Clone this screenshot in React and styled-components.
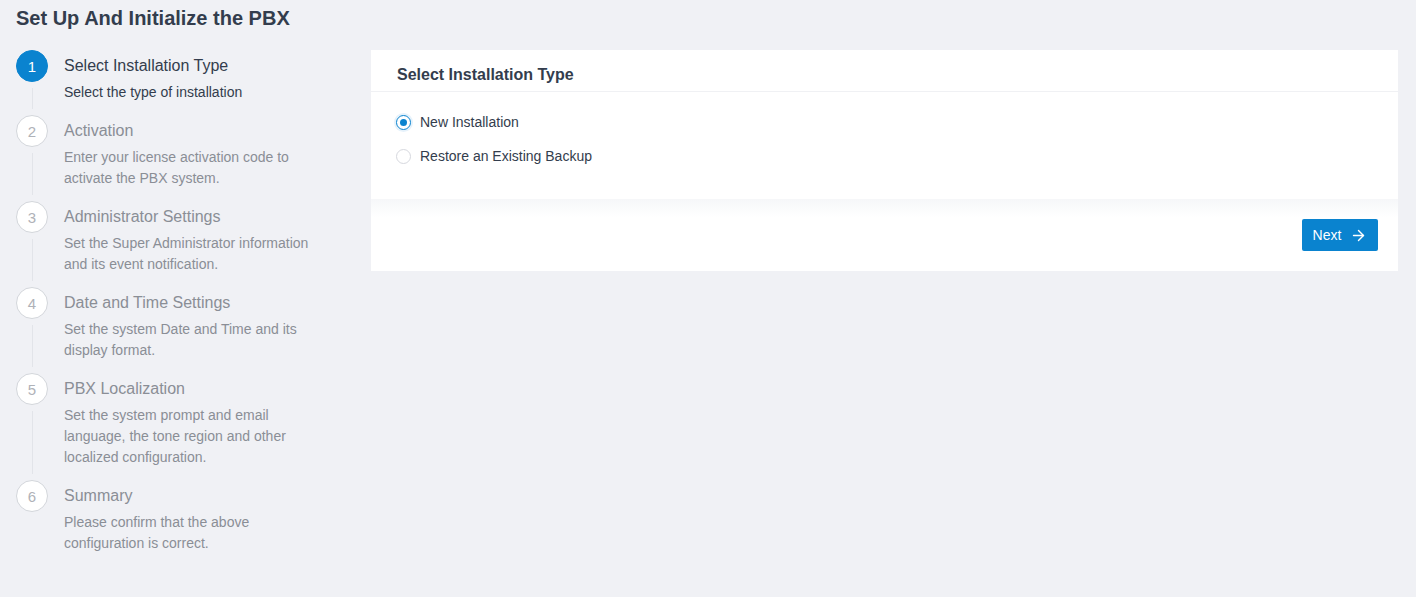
import styled, { createGlobalStyle } from "styled-components";
import { ArrowRight } from "lucide-react";

const GlobalStyle = createGlobalStyle`
  html, body {
    margin: 0;
    padding: 0;
    background: #f0f1f5;
    font-family: "Liberation Sans", Arial, sans-serif;
  }
`;

const Page = styled.div`
  min-height: 597px;
  box-sizing: border-box;
  padding: 6px 18px 0 16px;
`;

const Heading = styled.h1`
  margin: 0;
  font-size: 20px;
  line-height: 24px;
  font-weight: bold;
  color: #333d4d;
`;

const Body = styled.div`
  display: flex;
  align-items: flex-start;
  margin-top: 20px;
`;

const Steps = styled.div`
  width: 355px;
  flex: none;
  display: flex;
  flex-direction: column;
`;

const Step = styled.div`
  display: grid;
  grid-template-columns: 32px 1fr;
  column-gap: 16px;
  padding-bottom: 12px;
`;

const Rail = styled.div`
  display: flex;
  flex-direction: column;
  align-items: center;
`;

const Circle = styled.div`
  width: 32px;
  height: 32px;
  box-sizing: border-box;
  border-radius: 50%;
  display: flex;
  align-items: center;
  justify-content: center;
  font-size: 15px;
  background: ${(p) => (p.$active ? "#0a83cf" : "#fff")};
  border: 1px solid ${(p) => (p.$active ? "#0a83cf" : "#d3d6db")};
  color: ${(p) => (p.$active ? "#fff" : "#afb2b8")};
`;

const Connector = styled.div`
  flex: 1;
  width: 1px;
  margin: 6px 0 -6px;
  background: ${(p) => (p.$hidden ? "transparent" : "#e2e4e9")};
`;

const StepText = styled.div`
  display: flex;
  flex-direction: column;
`;

const StepTitle = styled.div`
  font-size: 16px;
  line-height: 32px;
  color: ${(p) => (p.$active ? "#333d4d" : "#8a8e96")};
`;

const StepDesc = styled.div`
  font-size: 14px;
  line-height: 21px;
  color: ${(p) => (p.$active ? "#333d4d" : "#8a8e96")};
  max-width: 260px;
`;

const Card = styled.div`
  flex: 1;
  background: #fff;
`;

const CardHeader = styled.div`
  height: 42px;
  box-sizing: border-box;
  padding: 8px 26px 0;
  display: flex;
  align-items: center;
  border-bottom: 1px solid #f0f1f4;
  font-size: 16px;
  font-weight: bold;
  color: #333d4d;
`;

const CardContent = styled.div`
  padding: 19px 25px 32px;
  display: flex;
  flex-direction: column;
  gap: 12px;
`;

const RadioRow = styled.label`
  display: flex;
  align-items: center;
  gap: 9px;
  height: 22px;
  font-size: 14px;
  color: #333d4d;
`;

const RadioDot = styled.span`
  width: 15px;
  height: 15px;
  box-sizing: border-box;
  border-radius: 50%;
  border: 1px solid ${(p) => (p.$checked ? "#0a83cf" : "#d6d8de")};
  background: #fff;
  display: flex;
  align-items: center;
  justify-content: center;
  box-shadow: ${(p) => (p.$checked ? "0 0 0 2px #e6f2fb" : "none")};

  &::after {
    content: "";
    width: 7px;
    height: 7px;
    border-radius: 50%;
    background: ${(p) => (p.$checked ? "#0a83cf" : "transparent")};
  }
`;

const CardFooter = styled.div`
  height: 72px;
  box-sizing: border-box;
  padding: 20px;
  display: flex;
  justify-content: flex-end;
  background: linear-gradient(to bottom, #f6f7f9 0px, #ffffff 18px);
`;

const Button = styled.button`
  height: 32px;
  width: 76px;
  border: none;
  border-radius: 2px;
  background: #0a83cf;
  color: #fff;
  font-family: inherit;
  font-size: 14px;
  display: flex;
  align-items: center;
  justify-content: center;
  gap: 9px;
  cursor: pointer;
`;

const steps = [
  { title: "Select Installation Type", desc: "Select the type of installation" },
  { title: "Activation", desc: "Enter your license activation code to activate the PBX system." },
  { title: "Administrator Settings", desc: "Set the Super Administrator information and its event notification." },
  { title: "Date and Time Settings", desc: "Set the system Date and Time and its display format." },
  { title: "PBX Localization", desc: "Set the system prompt and email language, the tone region and other localized configuration." },
  { title: "Summary", desc: "Please confirm that the above configuration is correct." },
];

export default function App() {
  return (
    <>
      <GlobalStyle />
      <Page>
        <Heading>Set Up And Initialize the PBX</Heading>
        <Body>
          <Steps>
            {steps.map((s, i) => (
              <Step key={s.title}>
                <Rail>
                  <Circle $active={i === 0}>{i + 1}</Circle>
                  <Connector $hidden={i === steps.length - 1} />
                </Rail>
                <StepText>
                  <StepTitle $active={i === 0}>{s.title}</StepTitle>
                  <StepDesc $active={i === 0}>{s.desc}</StepDesc>
                </StepText>
              </Step>
            ))}
          </Steps>
          <Card>
            <CardHeader>Select Installation Type</CardHeader>
            <CardContent>
              <RadioRow>
                <RadioDot $checked />
                New Installation
              </RadioRow>
              <RadioRow>
                <RadioDot />
                Restore an Existing Backup
              </RadioRow>
            </CardContent>
            <CardFooter>
              <Button>
                Next
                <ArrowRight size={17} strokeWidth={2} />
              </Button>
            </CardFooter>
          </Card>
        </Body>
      </Page>
    </>
  );
}
